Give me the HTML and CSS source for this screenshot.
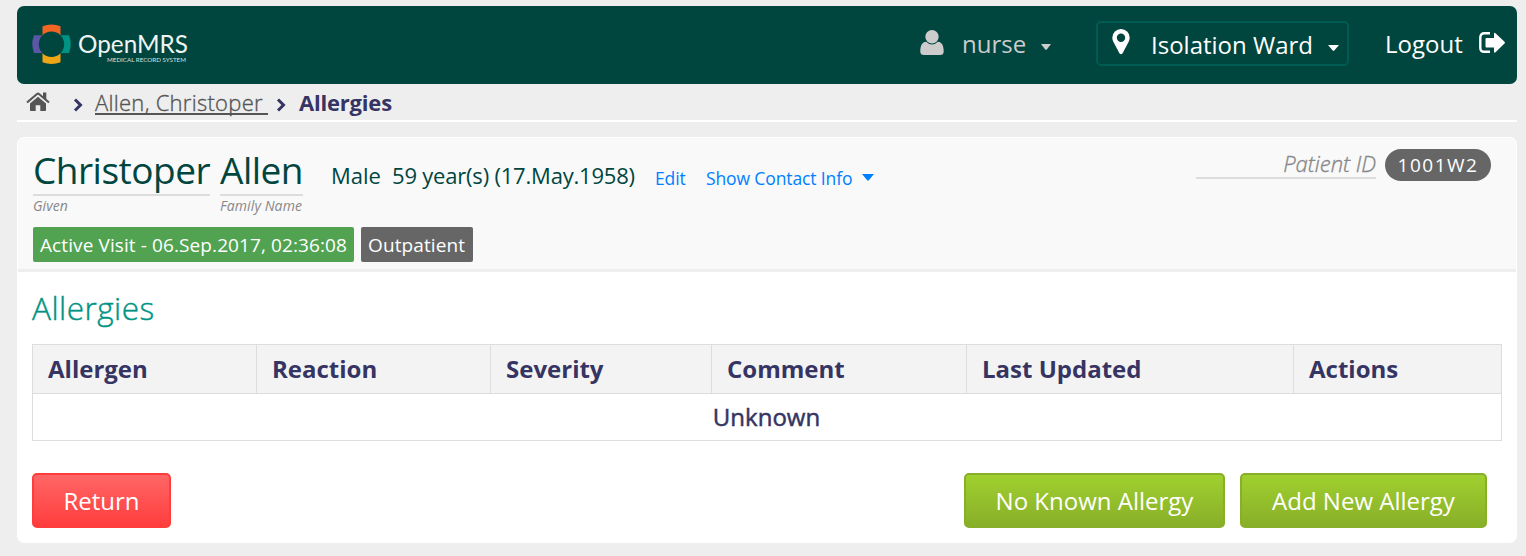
FILE: index.html
```html
<!DOCTYPE html>
<html lang="en">
<head>
<meta charset="utf-8">
<title>Allergies</title>
<link rel="stylesheet" href="styles.css">
</head>
<body>
<header class="topbar">
  <svg class="logo" width="160" height="46" viewBox="0 0 160 46">
    <path fill="#f26522" d="M10.500 14V4.200Q19.500 .800 28.500 4.200V14Z"/>
    <path fill="#eea616" d="M10.500 31V40.300Q19.500 43.700 28.500 40.300V31Z"/>
    <path fill="#5b57a6" d="M10.500 13.300H2Q-1.500 22 2 31H10.500Z"/>
    <path fill="#009384" d="M28.500 13.300H37Q40.500 22 37 31H28.500Z"/>
    <circle cx="19.500" cy="22.200" r="12.700" fill="#00463f"/>
    <text class="logo-name" x="46" y="31" textLength="110" lengthAdjust="spacingAndGlyphs">OpenMRS</text>
    <text class="logo-tag" x="75" y="40" textLength="79" lengthAdjust="spacingAndGlyphs">MEDICAL RECORD SYSTEM</text>
  </svg>
  <nav class="account">
    <div class="user">
      <svg width="24" height="26" viewBox="0 0 24 26"><path fill="#ccc" d="M12 0a6.700 6.700 0 0 1 0 13.400A6.700 6.700 0 0 1 12 0ZM6.200 11.800Q8.500 14.500 12 14.500T17.800 11.800C22 12 23.700 16 23.700 21.500Q23.700 25 20 25H4Q.300 25 .300 21.500C.300 16 2 12 6.200 11.800Z"/></svg>
      <span class="user-name">nurse</span>
      <svg width="10" height="6" viewBox="0 0 10 6"><path fill="#ccc" d="M0 0H10L5.800 5.400Q5 6 4.200 5.400Z"/></svg>
    </div>
    <div class="location">
      <svg width="18" height="26" viewBox="0 0 18 26"><path fill="#fff" fill-rule="evenodd" d="M9 0a8.700 8.700 0 0 1 8.700 8.700Q17.700 10.500 16.800 12.500L10.600 24.200Q9 26.500 7.400 24.200L1.200 12.500Q.300 10.500.300 8.700A8.700 8.700 0 0 1 9 0ZM9 4.500a4.200 4.200 0 1 0 0 8.400a4.200 4.200 0 0 0 0-8.400Z"/></svg>
      <span class="location-name">Isolation Ward</span>
      <svg width="11" height="6" viewBox="0 0 11 6"><path fill="#fff" d="M0 0H11L6.300 5.400Q5.500 6 4.700 5.400Z"/></svg>
    </div>
    <div class="logout">
      <span>Logout</span>
      <svg width="26" height="22" viewBox="0 0 26 22"><path fill="none" stroke="#fff" stroke-width="2.400" d="M11 1.300H5.500Q1.300 1.300 1.300 5.500V16Q1.300 19.800 5.500 19.800H11"/><path fill="#fff" d="M7.500 6H15V1.500Q15.300.300 16.500 1.200L25.500 9.800Q26.300 10.700 25.500 11.500L16.500 20.300Q15.300 21.200 15 20V15.500H7.500Q6.500 15.500 6.500 14.500V7Q6.500 6 7.500 6Z"/></svg>
    </div>
  </nav>
</header>

<nav class="breadcrumbs">
  <svg class="home" width="24" height="20" viewBox="0 0 24 20"><path fill="#555" d="M4 11.500L12 4.800L20 11.500V18.300Q20 19 19.200 19H14.300V13.200H9.700V19H4.800Q4 19 4 18.300Z"/><path fill="none" stroke="#555" stroke-width="2.100" d="M1 10.500L11 2Q12 1.200 13 2L23 10.500"/><path fill="#555" d="M17 .500H20.300V8.500L17 5.700Z"/></svg>
  <svg class="chevron first" width="10" height="14" viewBox="0 0 10 14"><path fill="none" stroke="#363463" stroke-width="3" d="M2 1.500L7.500 7L2 12.500"/></svg>
  <a class="crumb">Allen, Christoper&nbsp;</a>
  <svg class="chevron second" width="10" height="14" viewBox="0 0 10 14"><path fill="none" stroke="#363463" stroke-width="3" d="M2 1.500L7.500 7L2 12.500"/></svg>
  <b class="current">Allergies</b>
</nav>

<main class="card">
  <section class="patient">
    <div class="patient-row">
      <div class="name given"><span>Christoper</span><em>Given</em></div>
      <div class="name family"><span>Allen</span><em>Family Name</em></div>
      <div class="demographics"><span class="gender">Male</span><span class="age">59 year(s) (17.May.1958)</span></div>
      <a class="link edit">Edit</a>
      <a class="link contact">Show Contact Info</a>
      <svg class="link-caret" width="12" height="7" viewBox="0 0 12 7"><path fill="#007fff" d="M0 0H12L6.800 6.300Q6 7 5.200 6.300Z"/></svg>
      <div class="identifiers"><em>Patient ID</em><span class="pid">1001W2</span></div>
    </div>
    <div class="tags">
      <span class="tag active">Active Visit - 06.Sep.2017, 02:36:08</span>
      <span class="tag type">Outpatient</span>
    </div>
  </section>
  <section class="content">
    <h2>Allergies</h2>
    <table class="allergies">
      <colgroup><col class="c1"><col class="c2"><col class="c3"><col class="c4"><col class="c5"><col class="c6"></colgroup>
      <thead><tr><th>Allergen</th><th>Reaction</th><th>Severity</th><th>Comment</th><th>Last Updated</th><th>Actions</th></tr></thead>
      <tbody><tr><td colspan="6">Unknown</td></tr></tbody>
    </table>
    <div class="actions">
      <button class="btn cancel">Return</button>
      <button class="btn confirm none">No Known Allergy</button>
      <button class="btn confirm add">Add New Allergy</button>
    </div>
  </section>
</main>
</body>
</html>
```
FILE: styles.css
```css
* { box-sizing: border-box; }
body {
  margin: 0;
  height: 556px;
  padding: 6px 9px 0 17px;
  background: #eee;
  color: #363463;
  font: 24px/32px "Open Sans", sans-serif;
  overflow: hidden;
}
svg { display: block; flex: none; }
span, a, em, b { white-space: nowrap; }

.topbar {
  display: flex;
  justify-content: space-between;
  height: 78px;
  padding: 0 12px 0 15px;
  border-radius: 7px;
  background: #00463f;
  color: #fff;
}
.logo { margin-top: 16px; overflow: visible; }
.logo-name { font: 400 25px Lato, sans-serif; fill: #f0f5f4; }
.logo-tag { font: 400 6.500px Lato, sans-serif; fill: #d5e2e0; }
.account { display: flex; align-items: flex-start; }
.user { display: flex; margin-top: 22px; color: #ccc; }
.user svg:first-child { margin-top: 2px; }
.user-name { width: 66px; margin: 0 13px 0 18px; }
.user svg:last-child { margin-top: 16px; }
.location {
  display: flex;
  width: 253px;
  height: 45px;
  margin: 15px 36px 0 45px;
  padding: 6px 8px 0 14px;
  border: 2px solid #005c52;
  border-radius: 5px;
}
.location-name { width: 163px; margin: 0 15px 0 21px; }
.location svg:last-child { margin-top: 16px; }
.logout { display: flex; margin-top: 22px; }
.logout span { width: 78px; }
.logout svg { margin: 4px 0 0 16px; }

.breadcrumbs {
  display: flex;
  height: 38px;
  width: 1500px;
  padding: 2px 0 0 9px;
  border-bottom: 2px solid #fff;
  font-size: 22px;
}
.home { margin-top: 6px; }
.chevron { margin-top: 12px; }
.first { margin-left: 23px; }
.crumb {
  width: 173px;
  height: 29px;
  margin-left: 12px;
  border-bottom: 2px solid #555;
  color: #555;
  font-weight: 300;
  letter-spacing: .28px;
  -webkit-text-stroke: .35px #555;
}
.second { margin-left: 8px; }
.current { margin-left: 13px; letter-spacing: -.2px; }

.card {
  width: 1500px;
  height: 406px;
  margin-top: 15px;
  border: 1px solid #fff;
  border-radius: 7px;
  background: #fff;
  overflow: hidden;
}
.patient { height: 134px; padding: 0 25px 0 15px; border-bottom: 3px solid #eee; background: #f9f9f9; }
.patient-row { display: flex; height: 89px; }
.name { display: flex; flex-direction: column; color: #00463f; }
.name span { height: 58px; padding-top: 6px; border-bottom: 2px solid #ddd; font-size: 37px; line-height: 51px; letter-spacing: -.5px; }
.name em { color: #888; font-size: 14px; line-height: 20px; letter-spacing: .1px; }
.given { width: 177px; }
.family { width: 83px; margin-left: 10px; }
.demographics { display: flex; margin: 21px 0 0 28px; color: #00463f; font-size: 22px; }
.gender { width: 49px; }
.age { width: 244px; margin-left: 12px; letter-spacing: -.2px; }
.link { margin-top: 24px; color: #007fff; font-size: 17.500px; letter-spacing: -.12px; }
.edit { width: 31px; margin-left: 19px; }
.contact { width: 147px; margin-left: 20px; }
.link-caret { margin: 36px 0 0 9px; }
.identifiers { display: flex; margin: 11px 0 0 auto; height: 32px; }
.identifiers em {
  width: 180px;
  height: 30px;
  border-bottom: 2px solid #ddd;
  color: #888;
  font-size: 22px;
  line-height: 29px;
  font-weight: 300;
  text-align: right;
  -webkit-text-stroke: .35px #888;
}
.pid { width: 106px; height: 32px; margin-left: 9px; border-radius: 16px; background: #666; color: #fff; font-size: 19px; letter-spacing: 1.500px; text-align: center; }
.tags { display: flex; gap: 7px; color: #fff; font-size: 19px; line-height: 36px; }
.tag { height: 35px; padding-left: 7px; border-radius: 2px; letter-spacing: .1px; }
.active { width: 321px; background: #51a351; }
.type { width: 112px; background: #666; }

.content { padding: 16px 14px 0; }
h2 { margin: 0; color: #009384; font-size: 31.500px; font-weight: 300; line-height: 40px; letter-spacing: .5px; -webkit-text-stroke: .4px #009384; }
.allergies { width: 1470px; margin-top: 16px; border-collapse: collapse; table-layout: fixed; }
.c1 { width: 224px; } .c2 { width: 234px; } .c3 { width: 221px; }
.c4 { width: 255px; } .c5 { width: 327px; } .c6 { width: 208px; }
th { height: 49px; padding: 0 0 0 15px; border: 1px solid #ddd; background: #f3f3f3; text-align: left; }
td { height: 47px; padding: 0 1px 0 0; border: 1px solid #ddd; text-align: center; -webkit-text-stroke: .5px #363463; }
.actions { display: flex; margin-top: 32px; padding-right: 15px; }
.btn { height: 55px; padding: 0; border: 2px solid; border-radius: 5px; color: #fff; font: 24px/32px "Open Sans", sans-serif; white-space: nowrap; }
.cancel { width: 139px; border-color: #ff3d3d; background: linear-gradient(#ff6666, #ff3d3d); }
.confirm { border-color: #88af28; background: linear-gradient(#a0d02f, #88af28); }
.none { width: 261px; margin-left: auto; }
.add { width: 247px; margin-left: 15px; }
```
